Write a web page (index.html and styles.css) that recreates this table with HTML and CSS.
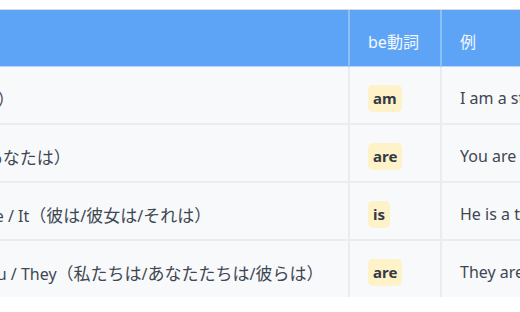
FILE: index.html
```html
<!DOCTYPE html>
<html lang="ja">
<head>
<meta charset="utf-8">
<link rel="stylesheet" href="styles.css">
</head>
<body>
<div class="wrap">
<table class="grid">
  <colgroup>
    <col class="c1"><col class="c2"><col class="c3">
  </colgroup>
  <thead>
    <tr><th>主語</th><th>be<span class="ja">動詞</span></th><th><span class="ja">例</span></th></tr>
  </thead>
  <tbody>
    <tr><td>I<span class="ja">（私は）</span></td><td><span class="be">am</span></td><td>I am a student.</td></tr>
    <tr><td>You<span class="ja">（あなたは）</span></td><td><span class="be">are</span></td><td>You are a teacher.</td></tr>
    <tr><td>He / She / It<span class="ja">（彼は</span>/<span class="ja">彼女は</span>/<span class="ja">それは）</span></td><td><span class="be">is</span></td><td>He is a teacher.</td></tr>
    <tr><td>We / You / They<span class="ja">（私たちは</span>/<span class="ja">あなたたちは</span>/<span class="ja">彼らは）</span></td><td><span class="be">are</span></td><td>They are students.</td></tr>
  </tbody>
</table>
</div>
</body>
</html>
```

FILE: styles.css
```css
html, body {
  margin: 0;
  padding: 0;
  background: #ffffff;
  overflow: hidden;
}
.wrap {
  padding-top: 9px;
  margin-left: -77px;
  width: 900px;
}
.grid {
  border-collapse: separate;
  border-spacing: 0;
  table-layout: fixed;
  width: 820px;
  font-family: "Noto Sans", "Noto Sans CJK JP", sans-serif;
  font-size: 16px;
  color: #404753;
  border-top: 1px solid #d6dbe1;
}
.ja {
  font-family: "Noto Sans CJK JP", sans-serif;
  font-size: 17px;
}
th .ja {
  font-size: 16px;
}
.c1 { width: 427px; }
.c2 { width: 92px; }
.c3 { width: 301px; }
.grid th {
  background: #5ea4f6;
  color: #f4f8ff;
  font-weight: 400;
  text-align: left;
  height: 57px;
  padding: 6px 18px 0;
  box-sizing: border-box;
  border-bottom: 1px solid #b9d6f8;
  border-right: 2px solid #8ec0f8;
  white-space: nowrap;
}
.grid td {
  background: #f8f9fb;
  height: 58px;
  padding: 6px 18px 0;
  box-sizing: border-box;
  border-bottom: 2px solid #eaecef;
  border-right: 2px solid #eaecef;
  white-space: nowrap;
  overflow: hidden;
}
.grid tbody tr:last-child td {
  border-bottom: 0;
  height: 56px;
}
.be {
  display: inline-block;
  background: #fef2c8;
  color: #333a45;
  font-weight: 700;
  font-size: 15px;
  line-height: 19px;
  padding: 4px 5px;
  border-radius: 5px;
}
```
